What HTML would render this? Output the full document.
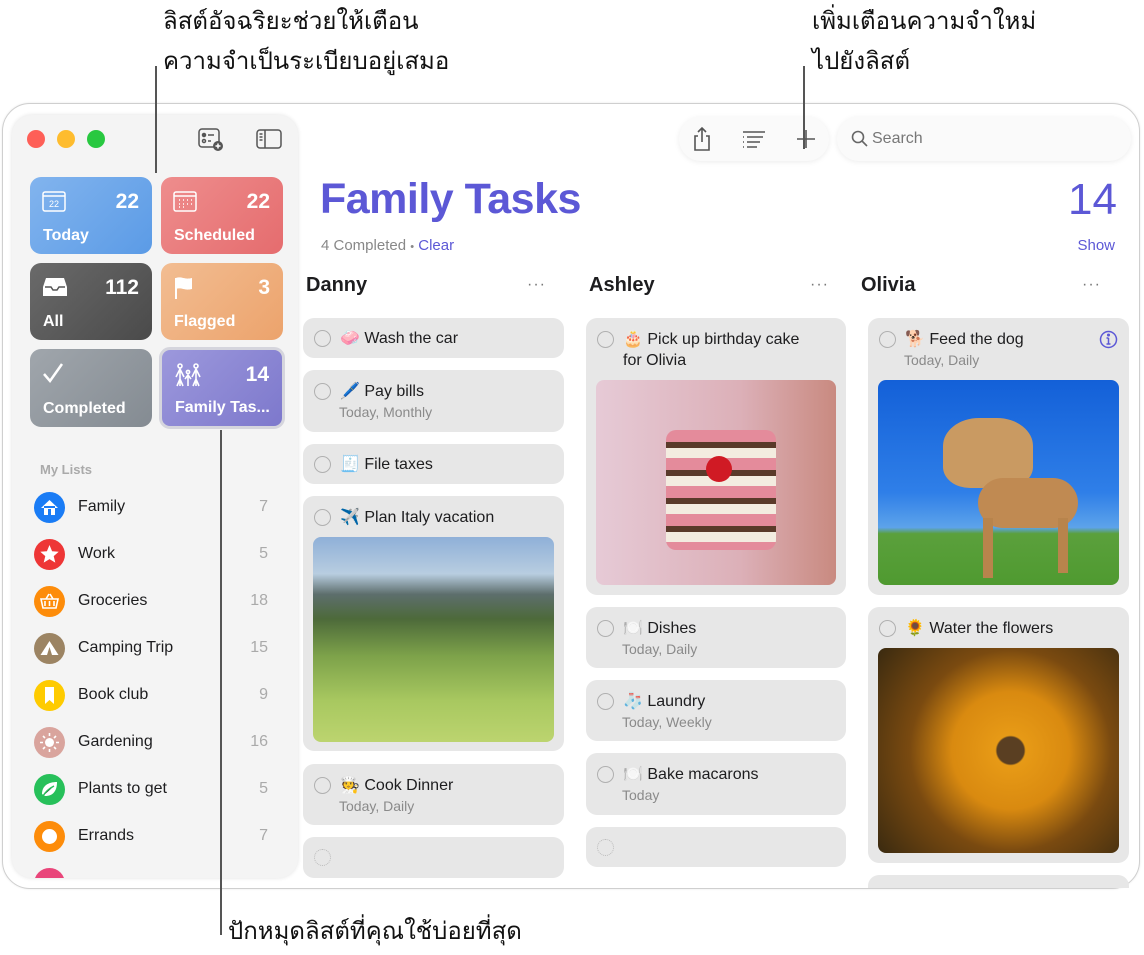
<!DOCTYPE html>
<html><head><meta charset="utf-8"><style>
*{margin:0;padding:0;box-sizing:border-box}
body{width:1144px;height:955px;background:#fff;position:relative;overflow:hidden;font-family:"Liberation Sans","DejaVu Sans",sans-serif;color:#1d1d1f}
.a{position:absolute}
.ann{position:absolute;font-size:24px;color:#111;line-height:40px;font-family:"Liberation Sans","DejaVu Sans",sans-serif}
.win{position:absolute;left:2px;top:103px;width:1138px;height:786px;border:1px solid #cfcfcf;border-radius:28px;background:#fff;overflow:hidden;box-shadow:0 0 2px rgba(0,0,0,.1)}
.side{position:absolute;left:9px;top:11px;width:286px;height:763px;background:#f4f4f4;border-radius:20px;box-shadow:0 0 4px rgba(0,0,0,.12);overflow:hidden}
.tl{position:absolute;width:18px;height:18px;border-radius:50%;top:15px}
.sc{position:absolute;width:122px;height:77px;border-radius:11px;color:#fff}
.sc .n{position:absolute;right:13px;top:13px;font-size:21px;font-weight:bold}
.sc .l{position:absolute;left:13px;bottom:9px;font-size:16px;font-weight:bold}
.sc svg{position:absolute;left:12px;top:13px}
.li{position:absolute;left:22px;height:32px;width:240px}
.li .ic{position:absolute;left:0;top:0;width:31px;height:31px;border-radius:50%}
.li .t{position:absolute;left:44px;top:6px;font-size:16px;color:#1d1d1f}
.li .c{position:absolute;right:6px;top:6px;font-size:16px;color:#aaa}
.card{position:absolute;background:#e7e7e7;border-radius:11px}
.ck{position:absolute;left:11px;top:13px;width:17px;height:17px;border:1.5px solid #b0b0b0;border-radius:50%}
.tt{position:absolute;left:37px;top:11px;font-size:16px;color:#1d1d1f;line-height:21px}
.st{position:absolute;left:36px;top:34px;font-size:14px;color:#8a8a8a}
.ch{position:absolute;font-size:20px;font-weight:bold;top:272px}
.dots{position:absolute;font-size:16px;color:#777;top:276px;letter-spacing:1px}
.img{position:absolute;border-radius:8px;left:10px}
</style></head><body>

<div class="ann" style="left:163px;top:2px">ลิสต์อัจฉริยะช่วยให้เตือน</div>
<div class="ann" style="left:163px;top:42px">ความจำเป็นระเบียบอยู่เสมอ</div>
<div class="ann" style="left:812px;top:2px">เพิ่มเตือนความจำใหม่</div>
<div class="ann" style="left:812px;top:42px">ไปยังลิสต์</div>
<div class="ann" style="left:228px;top:912px">ปักหมุดลิสต์ที่คุณใช้บ่อยที่สุด</div>

<div class="win">
 <div class="side">
  <div class="tl" style="left:15px;background:#fe5f57"></div>
  <div class="tl" style="left:45px;background:#febc2e"></div>
  <div class="tl" style="left:75px;background:#28c840"></div>
  <svg class="a" style="left:186px;top:13px" width="26" height="24" viewBox="0 0 26 24" fill="none" stroke="#555" stroke-width="1.5"><rect x="1" y="1" width="20" height="18" rx="3"/><circle cx="6" cy="7" r="1.5" fill="#555"/><line x1="10" y1="7" x2="16" y2="7"/><circle cx="6" cy="13" r="1.5"/><line x1="10" y1="13" x2="13" y2="13"/><circle cx="20" cy="18" r="5" fill="#555" stroke="none"/><path d="M20 15.5v5M17.5 18h5" stroke="#fff"/></svg>
  <svg class="a" style="left:244px;top:14px" width="26" height="20" viewBox="0 0 26 20" fill="none" stroke="#555" stroke-width="1.5"><rect x="1" y="1" width="24" height="18" rx="3"/><line x1="9" y1="1" x2="9" y2="19"/><path d="M3.5 5h3M3.5 8h3M3.5 11h3" /></svg>

  <div class="sc" style="left:18px;top:62px;background:linear-gradient(135deg,#82b4ee,#5b9be6)"><svg width="24" height="22" viewBox="0 0 24 22" fill="none" stroke="#fff" stroke-width="1.5"><rect x="1" y="2" width="22" height="19" rx="2"/><line x1="1" y1="6" x2="23" y2="6"/><text x="12" y="17" font-size="9" fill="#fff" stroke="none" text-anchor="middle" font-family="Liberation Sans">22</text></svg><div class="n">22</div><div class="l">Today</div></div>
  <div class="sc" style="left:149px;top:62px;background:linear-gradient(135deg,#ee8d8d,#e56c6e)"><svg width="24" height="22" viewBox="0 0 24 22" fill="none" stroke="#fff" stroke-width="1.5"><rect x="1" y="2" width="22" height="19" rx="2"/><line x1="1" y1="6" x2="23" y2="6"/><path d="M6 10h1M10 10h1M14 10h1M18 10h1M6 14h1M10 14h1M14 14h1M18 14h1M6 17h1M10 17h1"/></svg><div class="n">22</div><div class="l">Scheduled</div></div>
  <div class="sc" style="left:18px;top:148px;background:linear-gradient(135deg,#6a6a6a,#4a4a4a)"><svg width="26" height="22" viewBox="0 0 26 22"><path d="M4 2h18l3 9v9H1v-9z" fill="#fff"/><path d="M3 11h6l2 3h4l2-3h6" fill="none" stroke="#555" stroke-width="1.5"/></svg><div class="n">112</div><div class="l">All</div></div>
  <div class="sc" style="left:149px;top:148px;background:linear-gradient(135deg,#f2bd92,#eca36c)"><svg width="22" height="24" viewBox="0 0 22 24"><path d="M3 2v21" stroke="#fff" stroke-width="2"/><path d="M3 2c6-2 8 2 16 0v11c-8 2-10-2-16 0z" fill="#fff"/></svg><div class="n">3</div><div class="l">Flagged</div></div>
  <div class="sc" style="left:18px;top:234px;height:78px;background:linear-gradient(135deg,#a0a6ac,#848b92)"><svg width="22" height="22" viewBox="0 0 22 22"><path d="M2 12l6 7L20 2" fill="none" stroke="#fff" stroke-width="2.5"/></svg><div class="n"></div><div class="l">Completed</div></div>
  <div class="sc" style="left:147px;top:232px;width:126px;height:82px;border:3px solid #d5d5dd;background:linear-gradient(135deg,#9c98dc,#7d78cc)"><svg width="30" height="24" viewBox="0 0 30 24" fill="none" stroke="#fff" stroke-width="1.6"><circle cx="6" cy="3" r="2"/><circle cx="22" cy="3" r="2"/><circle cx="14" cy="9" r="1.6"/><path d="M2 14l4-8 4 8M6 6v17M3 23l3-7 3 7M18 14l4-8 4 8M22 6v17M19 23l3-7 3 7M11 16l3-4 3 4M14 12v11"/></svg><div class="n">14</div><div class="l">Family Tas...</div></div>

  <div class="a" style="left:28px;top:347px;font-size:13px;color:#aaa;font-weight:bold">My Lists</div>
  <div class="li" style="top:377px"><div class="ic" style="background:#1a7cf5"><svg width="31" height="31" viewBox="0 0 31 31"><path d="M7 16l8.5-8 8.5 8M10 14v9h11v-9" fill="#fff"/><rect x="14" y="17" width="3" height="6" fill="#1a7cf5"/></svg></div><div class="t">Family</div><div class="c">7</div></div>
  <div class="li" style="top:424px"><div class="ic" style="background:#ee3636"><svg width="31" height="31" viewBox="0 0 31 31"><path d="M15.5 6l2.6 6.2 6.6.5-5 4.4 1.6 6.5-5.8-3.5-5.8 3.5 1.6-6.5-5-4.4 6.6-.5z" fill="#fff"/></svg></div><div class="t">Work</div><div class="c">5</div></div>
  <div class="li" style="top:471px"><div class="ic" style="background:#fd8c0a"><svg width="31" height="31" viewBox="0 0 31 31" fill="none" stroke="#fff" stroke-width="1.6"><path d="M7 13h17l-2 9H9z"/><path d="M12 13l3-5M19 13l-3-5M11 15v5M15.5 15v5M20 15v5"/></svg></div><div class="t">Groceries</div><div class="c">18</div></div>
  <div class="li" style="top:518px"><div class="ic" style="background:#9c8463"><svg width="31" height="31" viewBox="0 0 31 31"><path d="M15.5 8l-9 14h18z" fill="#fff"/><path d="M15.5 14l-2.5 8h5z" fill="#9c8463"/></svg></div><div class="t">Camping Trip</div><div class="c">15</div></div>
  <div class="li" style="top:565px"><div class="ic" style="background:#fecb00"><svg width="31" height="31" viewBox="0 0 31 31"><path d="M11 7h9v17l-4.5-4-4.5 4z" fill="#fff"/></svg></div><div class="t">Book club</div><div class="c">9</div></div>
  <div class="li" style="top:612px"><div class="ic" style="background:#d9a49d"><svg width="31" height="31" viewBox="0 0 31 31"><circle cx="15.5" cy="15.5" r="4.5" fill="#fff"/><path d="M15.5 6v3M15.5 22v3M6 15.5h3M22 15.5h3M9 9l2 2M20 20l2 2M9 22l2-2M20 11l2-2" stroke="#fff" stroke-width="1.6"/></svg></div><div class="t">Gardening</div><div class="c">16</div></div>
  <div class="li" style="top:659px"><div class="ic" style="background:#27c05a"><svg width="31" height="31" viewBox="0 0 31 31"><path d="M8 20c0-8 6-12 15-12 0 9-4 14-12 14z" fill="#fff"/><path d="M9 22c3-5 7-8 11-10" stroke="#27c05a" stroke-width="1.5"/></svg></div><div class="t">Plants to get</div><div class="c">5</div></div>
  <div class="li" style="top:706px"><div class="ic" style="background:#fd8c0a"><div class="a" style="left:8px;top:8px;width:15px;height:15px;border-radius:50%;background:#fff"></div></div><div class="t">Errands</div><div class="c">7</div></div>
  <div class="li" style="top:753px"><div class="ic" style="background:#e9457a"></div></div>
 </div>

 <!-- toolbar -->
 <div class="a" style="left:676px;top:13px;width:150px;height:44px;border-radius:22px;background:#fafafa;box-shadow:0 1px 6px rgba(0,0,0,.08)">
  <svg class="a" style="left:12px;top:9px" width="22" height="26" viewBox="0 0 22 26" fill="none" stroke="#555" stroke-width="1.6"><path d="M11 2v14M7 6l4-4 4 4M7 10H4v14h14V10h-3"/></svg>
  <svg class="a" style="left:63px;top:13px" width="24" height="18" viewBox="0 0 24 18" stroke="#555" stroke-width="1.6"><path d="M1 2h22M5 7h16M5 12h13M5 17h10M1 7h1M1 12h1M1 17h1"/></svg>
  <svg class="a" style="left:117px;top:12px" width="20" height="20" viewBox="0 0 20 20" stroke="#555" stroke-width="1.6"><path d="M10 1v18M1 10h18"/></svg>
 </div>
 <div class="a" style="left:834px;top:13px;width:294px;height:44px;border-radius:22px;background:#fafafa;box-shadow:0 1px 6px rgba(0,0,0,.08)">
  <svg class="a" style="left:14px;top:13px" width="18" height="18" viewBox="0 0 18 18" fill="none" stroke="#666" stroke-width="1.6"><circle cx="7" cy="7" r="5.5"/><path d="M11 11l5 5"/></svg>
  <div class="a" style="left:35px;top:13px;font-size:16px;color:#777">Search</div>
 </div>

 <div class="a" style="left:317px;top:71px;font-size:43px;font-weight:bold;color:#5c58d6;letter-spacing:-0.5px">Family Tasks</div>
 <div class="a" style="right:22px;top:71px;font-size:44px;color:#5c58d6">14</div>
 <div class="a" style="left:318px;top:133px;font-size:15px;color:#888">4 Completed <span style="font-size:11px">•</span> <span style="color:#5c58d6">Clear</span></div>
 <div class="a" style="right:24px;top:133px;font-size:15px;color:#5c58d6">Show</div>

 <div class="ch" style="left:303px;top:170px">Danny</div><div class="dots" style="left:524px;top:172px">···</div>
 <div class="ch" style="left:586px;top:170px">Ashley</div><div class="dots" style="left:807px;top:172px">···</div>
 <div class="ch" style="left:858px;top:170px">Olivia</div><div class="dots" style="left:1079px;top:172px">···</div>
</div>

<div style="position:absolute;left:0;top:0;width:1144px;height:888px;overflow:hidden;clip-path:inset(0 0 0 300px)">
<div class="card" style="left:303px;top:318px;width:261px;height:40px"><div class="ck" style="top:12px"></div><div class="tt" style="top:10px">🧼 Wash the car</div></div>
<div class="card" style="left:303px;top:370px;width:261px;height:62px"><div class="ck"></div><div class="tt">🖊️ Pay bills</div><div class="st">Today, Monthly</div></div>
<div class="card" style="left:303px;top:444px;width:261px;height:40px"><div class="ck" style="top:12px"></div><div class="tt" style="top:10px">🧾 File taxes</div></div>
<div class="card" style="left:303px;top:496px;width:261px;height:255px"><div class="ck"></div><div class="tt">✈️ Plan Italy vacation</div>
 <div class="img" style="top:41px;width:241px;height:205px;background:linear-gradient(180deg,#8fb0d8 0%,#b8cde0 18%,#5d6e6c 28%,#4d6a3a 40%,#7da24a 58%,#a8c860 80%,#bcd46f 100%)"></div></div>
<div class="card" style="left:303px;top:764px;width:261px;height:61px"><div class="ck"></div><div class="tt">🧑‍🍳 Cook Dinner</div><div class="st">Today, Daily</div></div>
<div class="card" style="left:303px;top:837px;width:261px;height:41px"><div class="ck" style="top:12px;border-style:dotted;border-color:#bbb"></div></div>

<div class="card" style="left:586px;top:318px;width:260px;height:277px"><div class="ck"></div><div class="tt">🎂 Pick up birthday cake<br>for Olivia</div>
 <div class="img" style="top:62px;width:240px;height:205px;background:linear-gradient(90deg,#e6cad6,#dcb0b8 60%,#c98a80)"></div>
 <div class="a" style="left:80px;top:112px;width:110px;height:120px;border-radius:10px;background:repeating-linear-gradient(180deg,#e48b9b 0 12px,#5a3a2a 12px 18px,#f3ece0 18px 28px)"></div>
 <div class="a" style="left:120px;top:138px;width:26px;height:26px;border-radius:50%;background:#d01a24"></div></div>
<div class="card" style="left:586px;top:607px;width:260px;height:61px"><div class="ck"></div><div class="tt">🍽️ Dishes</div><div class="st">Today, Daily</div></div>
<div class="card" style="left:586px;top:680px;width:260px;height:61px"><div class="ck"></div><div class="tt">🧦 Laundry</div><div class="st">Today, Weekly</div></div>
<div class="card" style="left:586px;top:753px;width:260px;height:62px"><div class="ck"></div><div class="tt">🍽️ Bake macarons</div><div class="st">Today</div></div>
<div class="card" style="left:586px;top:827px;width:260px;height:40px"><div class="ck" style="top:12px;border-style:dotted;border-color:#bbb"></div></div>

<div class="card" style="left:868px;top:318px;width:261px;height:277px"><div class="ck"></div><div class="tt">🐕 Feed the dog</div><div class="st">Today, Daily</div>
 <svg class="a" style="left:231px;top:12px" width="19" height="19" viewBox="0 0 19 19" fill="none" stroke="#5c58d6" stroke-width="1.5"><circle cx="9.5" cy="9.5" r="8"/><path d="M9.5 8v6M7.5 14h4M7.5 8h2"/><circle cx="9.5" cy="5" r=".8" fill="#5c58d6"/></svg>
 <div class="img" style="top:62px;width:241px;height:205px;background:linear-gradient(180deg,#1360d8 0%,#2f7fe8 55%,#5da3ea 72%,#5ba03c 75%,#4f9a30 100%)"></div>
 <div class="a" style="left:75px;top:100px;width:90px;height:70px;border-radius:40% 40% 30% 30%;background:#c99a62"></div>
 <div class="a" style="left:110px;top:160px;width:100px;height:50px;border-radius:30px;background:#c08a52"></div>
 <div class="a" style="left:115px;top:200px;width:10px;height:60px;background:#b8844c"></div>
 <div class="a" style="left:190px;top:200px;width:10px;height:55px;background:#b8844c"></div></div>
<div class="card" style="left:868px;top:607px;width:261px;height:256px"><div class="ck"></div><div class="tt">🌻 Water the flowers</div>
 <div class="img" style="top:41px;width:241px;height:205px;background:radial-gradient(circle at 55% 50%,#5a3f22 0,#5a3f22 8%,#e79a16 9%,#d98a10 35%,#7a4a10 60%,#3a2a10 100%)"></div></div>
<div class="card" style="left:868px;top:875px;width:261px;height:40px"></div>
</div>

<div class="a" style="left:155px;top:66px;width:2px;height:107px;background:#555"></div>
<div class="a" style="left:803px;top:66px;width:2px;height:83px;background:#555"></div>
<div class="a" style="left:220px;top:430px;width:2px;height:505px;background:#555"></div>
</body></html>
